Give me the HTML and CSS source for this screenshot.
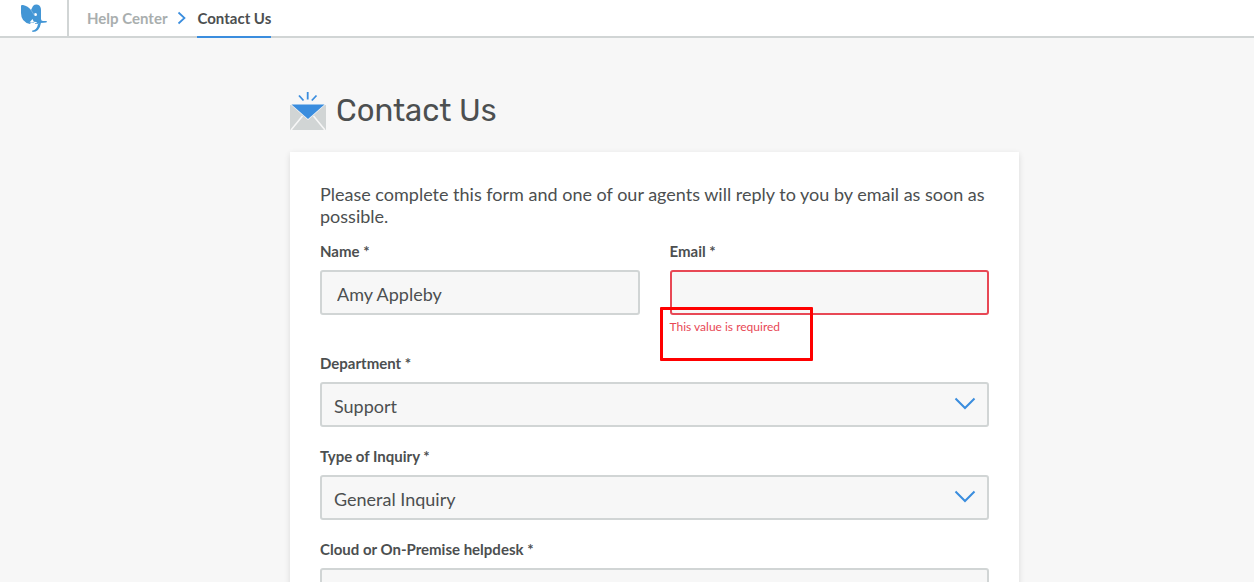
FILE: index.html
```html
<!DOCTYPE html>
<html lang="en">
<head>
<meta charset="utf-8">
<meta name="viewport" content="width=device-width, initial-scale=1">
<title>Contact Us</title>
<link rel="stylesheet" href="styles.css">
</head>
<body>
<header class="topbar">
  <a class="logo" href="#" aria-label="Home">
    <svg width="26" height="28" viewBox="0 0 26 28" fill="#4396d5">
      <path d="M0 2Q0 .5 2 1Q7 2 10 6L12 2Q14 0 17 .7Q20 2 20 6V15Q20 17 22 17H25.500V18.300L20 18.700Q18.500 28 11.500 28L11 26.800Q16 26 17 20H14V18.500H10L9 20Q0 18 0 9Z"/>
      <path d="M8.500 18.500L11.500 15L13.500 19.200H18.500L14 17.800" fill="#fff"/>
      <path d="M15.800 18.200Q19 16.800 25.500 17V18.300L19.700 18.700L16 19.500Z"/>
      <circle cx="14.500" cy="10.500" r="1.500" fill="#fff"/>
      <path d="M10 6L13.500 11.500" fill="none" stroke="#74b1e0" stroke-width="1"/>
    </svg>
  </a>
  <nav class="crumbs" aria-label="Breadcrumb">
    <a class="crumb" href="#">Help Center</a>
    <svg class="crumb-arrow" width="10" height="14" viewBox="0 0 10 14" fill="none" stroke="#3a8dde" stroke-width="1.700"><path d="M1.500 1.500L7.500 7L1.500 12.500"/></svg>
    <a class="crumb crumb-current" href="#" aria-current="page">Contact Us</a>
  </nav>
</header>
<main class="page">
  <div class="heading">
    <svg width="36" height="38" viewBox="0 0 36 38">
      <path d="M9 3.500L13.500 8.500M17.700 0V7.500M26.500 3.500L21.800 8.500" fill="none" stroke="#3a8dde" stroke-width="1.800"/>
      <path d="M0 13H36V38H0Z" fill="#d1d5d5"/>
      <path d="M0 12H36L18 28Z" fill="#f7f7f7"/>
      <path d="M1 38L12.500 24M35 38L23.500 24" fill="none" stroke="#f7f7f7" stroke-width="1.600"/>
      <path d="M1.500 12.500H34.500L18 27Z" fill="#3a8dde"/>
    </svg>
    <h1 class="title">Contact Us</h1>
  </div>
  <form class="card" novalidate>
    <p class="intro">Please complete this form and one of our agents will reply to you by email as soon as possible.</p>
    <div class="row">
      <div class="field">
        <label class="label" for="name">Name *</label>
        <input class="control" id="name" type="text" value="Amy Appleby">
      </div>
      <div class="field">
        <label class="label" for="email">Email *</label>
        <input class="control control-invalid" id="email" type="email" aria-invalid="true" aria-describedby="email-error">
        <p class="error" id="email-error">This value is required</p>
      </div>
    </div>
    <div class="field">
      <label class="label" for="department">Department *</label>
      <div class="select-wrap">
        <select class="control select" id="department"><option>Support</option></select>
        <svg class="chevron" width="22" height="14" viewBox="0 0 22 14" fill="none" stroke="#3a8dde" stroke-width="2"><path d="M1.500 1.500L11 11L20.500 1.500"/></svg>
      </div>
    </div>
    <div class="field">
      <label class="label" for="inquiry">Type of Inquiry *</label>
      <div class="select-wrap">
        <select class="control select" id="inquiry"><option>General Inquiry</option></select>
        <svg class="chevron" width="22" height="14" viewBox="0 0 22 14" fill="none" stroke="#3a8dde" stroke-width="2"><path d="M1.500 1.500L11 11L20.500 1.500"/></svg>
      </div>
    </div>
    <div class="field">
      <label class="label" for="helpdesk">Cloud or On-Premise helpdesk *</label>
      <div class="select-wrap">
        <select class="control select" id="helpdesk"></select>
        <svg class="chevron" width="22" height="14" viewBox="0 0 22 14" fill="none" stroke="#3a8dde" stroke-width="2"><path d="M1.500 1.500L11 11L20.500 1.500"/></svg>
      </div>
    </div>
  </form>
</main>
</body>
</html>
```

FILE: styles.css
```css
* {
  box-sizing: border-box;
}

html {
  scrollbar-width: none;
}

body {
  margin: 0;
  background: #f7f7f7;
  color: #4c4f50;
  font-family: Lato, "Liberation Sans", sans-serif;
}

.topbar {
  display: flex;
  height: 38px;
  background: #fff;
  border-bottom: 2px solid #d1d5d5;
}

.logo {
  display: flex;
  width: 69px;
  padding: 4px 0 0 21px;
  border-right: 2px solid #d1d5d5;
}

.crumbs {
  display: flex;
  align-items: center;
  padding-left: 18px;
  gap: 10px;
  font-size: 15px;
  font-weight: 700;
}

.crumb {
  height: 38px;
  line-height: 36px;
  align-self: flex-start;
  color: #a9aeae;
  text-decoration: none;
}

.crumb-current {
  color: #4c4f50;
  border-bottom: 2px solid #3a8dde;
}

.page {
  max-width: 784px;
  margin: 0 auto;
  padding: 54px 0 40px 55px;
}

.heading {
  display: flex;
  align-items: center;
  gap: 10px;
  height: 38px;
  margin-bottom: 22px;
}

.title {
  margin: 0;
  font: 400 31px/38px Rubik, Roboto, sans-serif;
}

.card {
  display: flex;
  flex-direction: column;
  gap: 18px;
  padding: 31px 30px 40px;
  background: #fff;
  box-shadow: 0 2px 6px rgba(0, 0, 0, 0.12);
}

.intro {
  margin: 0 0 -5px;
  font-size: 18px;
  line-height: 22px;
}

.row {
  display: grid;
  grid-template-columns: 1fr 1fr;
  gap: 30px;
}

.label {
  display: block;
  margin-bottom: 8px;
  font-size: 15px;
  font-weight: 700;
  line-height: 22px;
}

.control {
  display: block;
  width: 100%;
  height: 45px;
  padding: 2px 15px 0;
  border: 2px solid #d1d5d5;
  border-radius: 3px;
  background: #f7f7f7;
  color: #4c4f50;
  font: 18px Lato, "Liberation Sans", sans-serif;
}

.control-invalid {
  border-color: #e84855;
}

.select {
  appearance: none;
  padding: 2px 40px 0 12px;
}

.select-wrap {
  position: relative;
}

.chevron {
  position: absolute;
  top: 15px;
  right: 13px;
  pointer-events: none;
}

.error {
  position: relative;
  margin: 4px 0 0;
  color: #e84855;
  font-size: 12px;
  line-height: 15px;
}

.error::after {
  content: "";
  position: absolute;
  top: -12px;
  left: -10px;
  width: 147px;
  height: 48px;
  border: 3px solid #f00;
  border-radius: 1px;
}
```
